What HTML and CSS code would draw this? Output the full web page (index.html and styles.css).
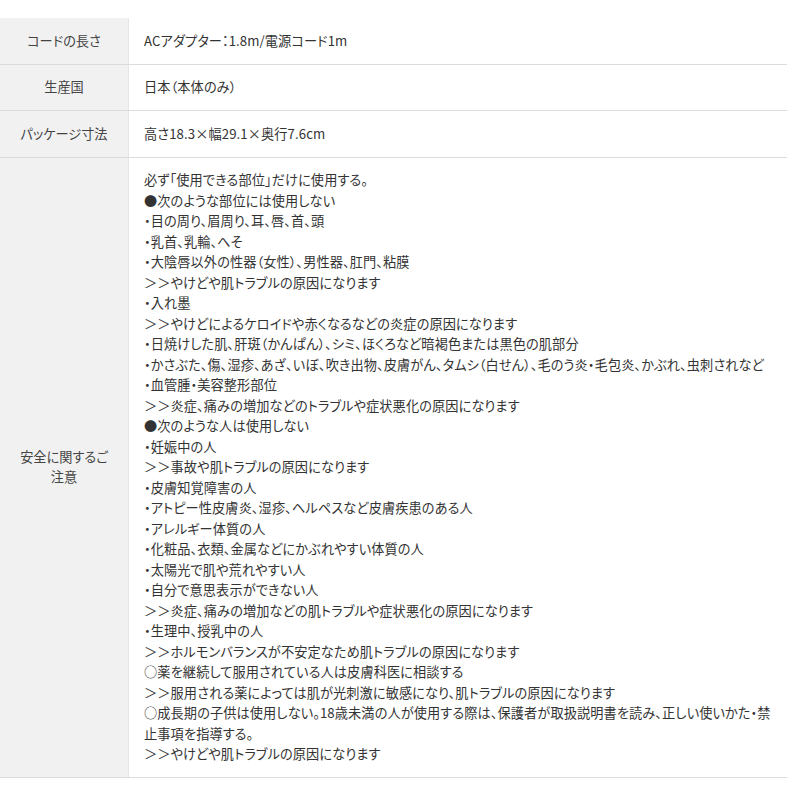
FILE: index.html
```html
<!DOCTYPE html>
<html lang="ja">
<head>
  <meta charset="UTF-8">
  <title>製品仕様</title>
  <link rel="stylesheet" href="styles.css">
</head>
<body>
  <table class="spec">
    <tr>
      <th>コードの長さ</th>
      <td>ACアダプター：1.8m/電源コード1m</td>
    </tr>
    <tr>
      <th>生産国</th>
      <td>日本（本体のみ）</td>
    </tr>
    <tr>
      <th>パッケージ寸法</th>
      <td>高さ18.3×幅29.1×奥行7.6cm</td>
    </tr>
    <tr>
      <th>安全に関するご注意</th>
      <td>
        必ず「使用できる部位」だけに使用する。<br>
        ●次のような部位には使用しない<br>
        ・目の周り、眉周り、耳、唇、首、頭<br>
        ・乳首、乳輪、へそ<br>
        ・大陰唇以外の性器（女性）、男性器、肛門、粘膜<br>
        ＞＞やけどや肌トラブルの原因になります<br>
        ・入れ墨<br>
        ＞＞やけどによるケロイドや赤くなるなどの炎症の原因になります<br>
        ・日焼けした肌、肝斑（かんぱん）、シミ、ほくろなど暗褐色または黒色の肌部分<br>
        ・かさぶた、傷、湿疹、あざ、いぼ、吹き出物、皮膚がん、タムシ（白せん）、毛のう炎・毛包炎、かぶれ、虫刺されなど<br>
        ・血管腫・美容整形部位<br>
        ＞＞炎症、痛みの増加などのトラブルや症状悪化の原因になります<br>
        ●次のような人は使用しない<br>
        ・妊娠中の人<br>
        ＞＞事故や肌トラブルの原因になります<br>
        ・皮膚知覚障害の人<br>
        ・アトピー性皮膚炎、湿疹、ヘルペスなど皮膚疾患のある人<br>
        ・アレルギー体質の人<br>
        ・化粧品、衣類、金属などにかぶれやすい体質の人<br>
        ・太陽光で肌や荒れやすい人<br>
        ・自分で意思表示ができない人<br>
        ＞＞炎症、痛みの増加などの肌トラブルや症状悪化の原因になります<br>
        ・生理中、授乳中の人<br>
        ＞＞ホルモンバランスが不安定なため肌トラブルの原因になります<br>
        ○薬を継続して服用されている人は皮膚科医に相談する<br>
        ＞＞服用される薬によっては肌が光刺激に敏感になり、肌トラブルの原因になります<br>
        ○成長期の子供は使用しない。18歳未満の人が使用する際は、保護者が取扱説明書を読み、正しい使いかた・禁止事項を指導する。<br>
        ＞＞やけどや肌トラブルの原因になります
      </td>
    </tr>
  </table>
</body>
</html>
```

FILE: styles.css
```css
body {
  margin: 0;
  padding-top: 18px;
  background: #fff;
  font-family: "Noto Sans CJK JP", "Noto Sans", sans-serif;
  font-feature-settings: "palt";
  font-size: 13.2px;
  color: #333;
}
.spec {
  width: 787px;
  border-collapse: collapse;
}
.spec th,
.spec td {
  line-height: 20.5px;
  padding: 12.5px 15px;
  border-bottom: 1px solid #dcdcdc;
  vertical-align: middle;
}
.spec th {
  width: 98px;
  background: #f1f1f1;
  border-right: 1px solid #e6e6e6;
  font-weight: normal;
  color: #444;
  text-align: center;
}
.spec td {
  text-align: left;
  letter-spacing: 0.1px;
}
```
